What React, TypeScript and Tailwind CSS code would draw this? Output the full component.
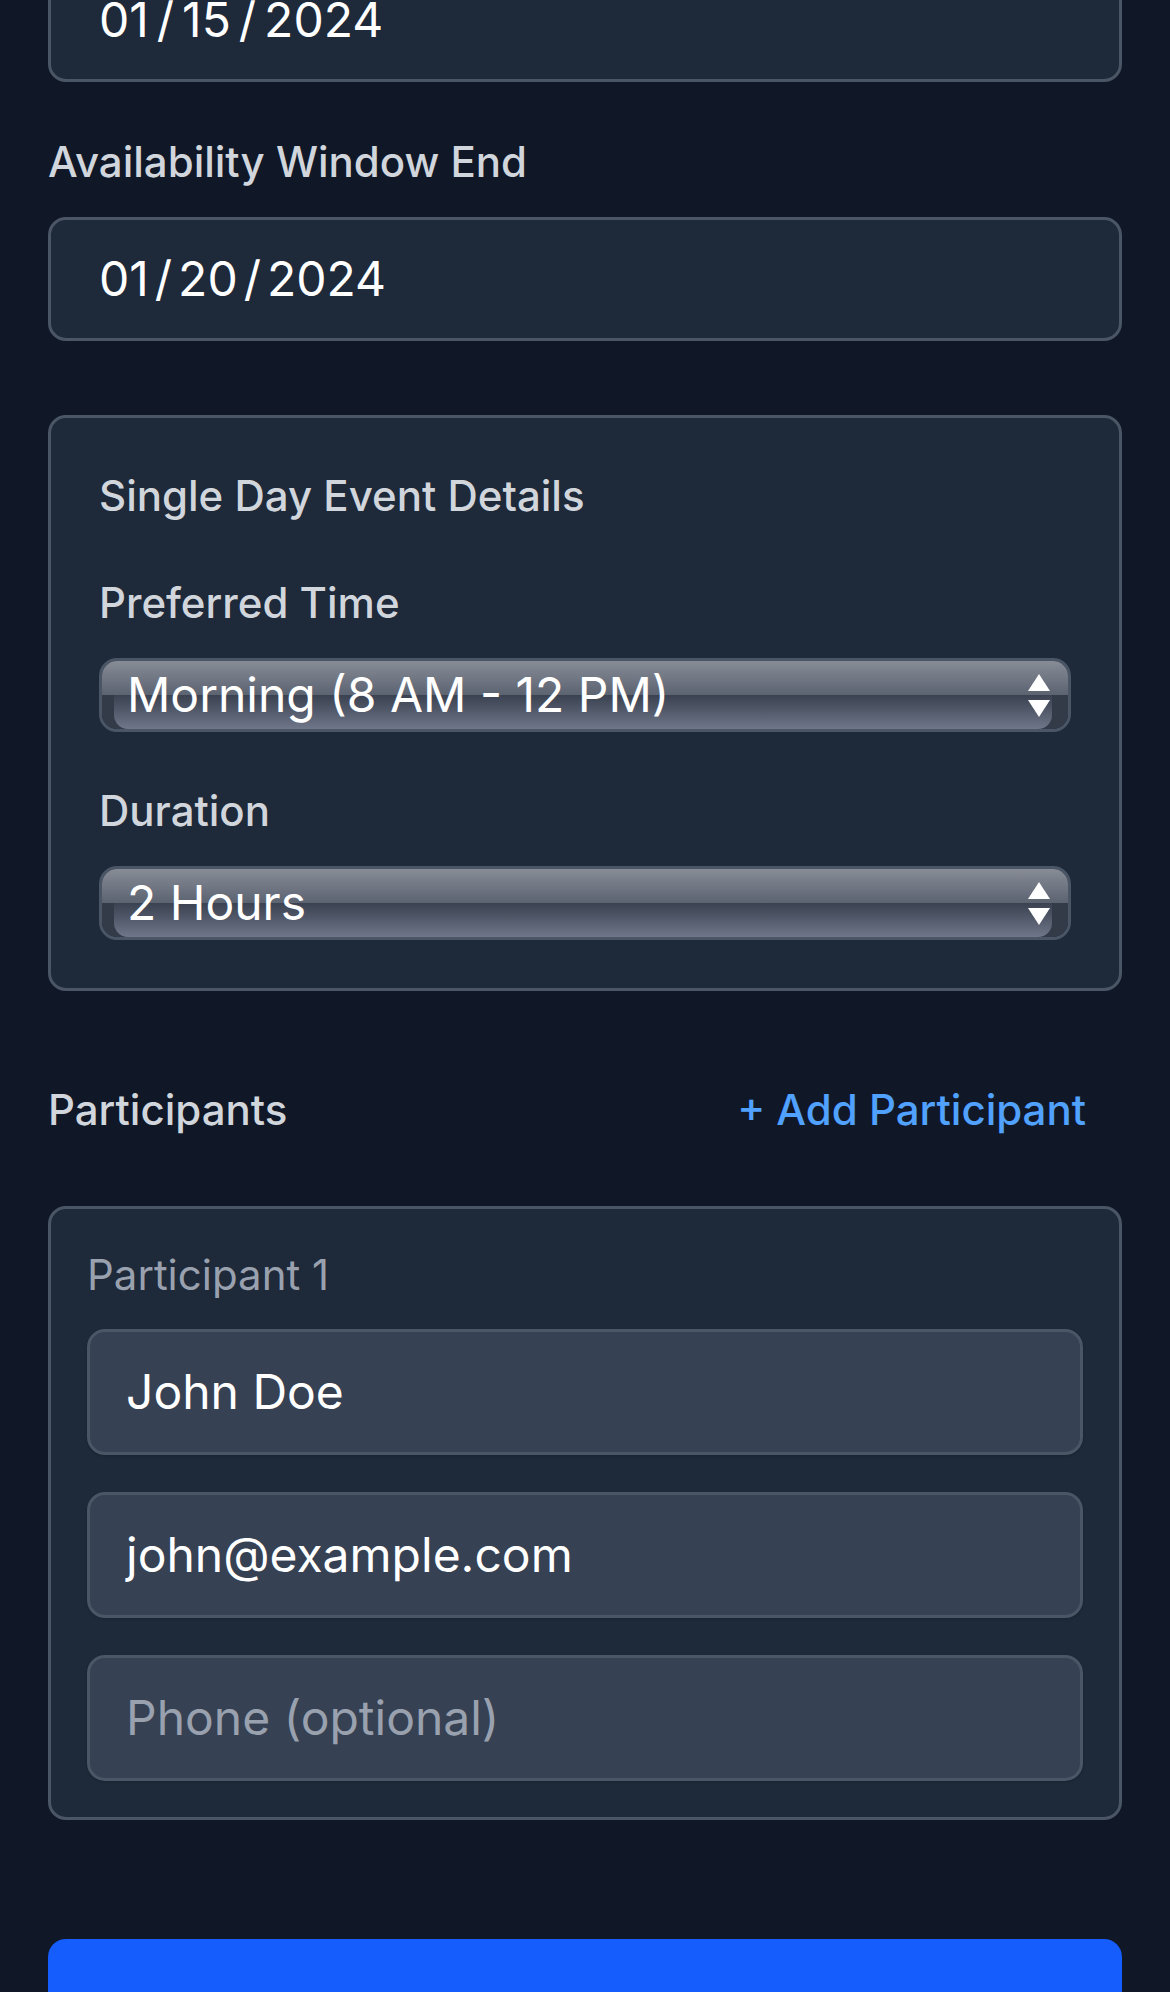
import React from "react";

const font = { fontFamily: "Inter, 'Noto Sans', sans-serif" };

function Label({ children }: { children: React.ReactNode }) {
  return <p className="mb-[25px] text-[42px] leading-[60px] font-medium text-gray-300">{children}</p>;
}

// date segments are spaced like a native date input
function DateField({ parts, wide }: { parts: string[]; wide?: boolean }) {
  const sep = wide ? "mx-[8px]" : "mx-[6px]";
  return (
    <div className="flex h-[124px] items-center rounded-[18px] border-[3px] border-gray-600 bg-gray-800 px-[48px]">
      <span className="text-[48px] leading-[72px] text-white">
        {parts[0]}
        <span className={sep}>/</span>
        {parts[1]}
        <span className={sep}>/</span>
        {parts[2]}
      </span>
    </div>
  );
}

function GlossSelect({ value }: { value: string }) {
  return (
    <div className="grid h-[74px] overflow-hidden rounded-[18px] border-[3px] border-gray-600">
      {/* webkit-ish glossy menulist look */}
      <div className="flex flex-col [grid-area:1/1]">
        <div className="h-1/2 bg-gradient-to-b from-[#878c96] to-[#5c6371]" />
        <div className="flex h-1/2 bg-[#333a48]">
          <div className="w-[12px]" />
          <div className="flex-1 rounded-b-[14px] bg-gradient-to-b from-[#3a4150] to-[#70778a]" />
          <div className="w-[16px]" />
        </div>
      </div>
      <div className="flex items-center justify-between pl-[25px] pr-[18px] [grid-area:1/1]">
        <span className="text-[48px] leading-[60px] text-white">{value}</span>
        <svg width="22" height="43" viewBox="0 0 22 43" fill="white">
          <polygon points="11,0 22,17 0,17" />
          <polygon points="0,26 22,26 11,43" />
        </svg>
      </div>
    </div>
  );
}

function TextField({ value, placeholder }: { value?: string; placeholder?: string }) {
  return (
    <div className="flex h-[126px] items-center rounded-[18px] border-[3px] border-gray-600 bg-gray-700 px-[36px] shadow-sm">
      {value ? (
        <span className="text-[48px] leading-[72px] text-white">{value}</span>
      ) : (
        <span className="text-[48px] leading-[72px] text-gray-400">{placeholder}</span>
      )}
    </div>
  );
}

export default function App() {
  return (
    <div className="h-[1992px] w-full overflow-hidden bg-gray-900" style={font}>
      <div className="mt-[-42px] px-[48px]">
        <DateField parts={["01", "15", "2024"]} wide />

        <div className="mt-[50px]">
          <Label>Availability Window End</Label>
          <DateField parts={["01", "20", "2024"]} />
        </div>

        <section className="mt-[74px] rounded-[18px] border-[3px] border-gray-600 bg-gray-800 p-[48px]">
          <h3 className="mb-[47px] text-[42px] leading-[60px] font-medium text-gray-300">Single Day Event Details</h3>
          <Label>Preferred Time</Label>
          <GlossSelect value="Morning (8 AM - 12 PM)" />
          <div className="mt-[49px]">
            <Label>Duration</Label>
            <GlossSelect value="2 Hours" />
          </div>
        </section>

        <div className="mt-[70px] mb-[47px] flex h-[98px] items-center justify-between">
          <h3 className="text-[42px] leading-[60px] font-medium text-gray-300">Participants</h3>
          <button className="pr-[36px] text-[42px] leading-[60px] font-medium text-blue-400">+ Add Participant</button>
        </div>

        <div className="rounded-[18px] border-[3px] border-gray-600 bg-gray-800 p-[36px]">
          <p className="mb-[24px] text-[42px] leading-[60px] text-gray-400">Participant 1</p>
          <div className="flex flex-col gap-[37px]">
            <TextField value="John Doe" />
            <TextField value="john@example.com" />
            <TextField placeholder="Phone (optional)" />
          </div>
        </div>

        <button className="mt-[119px] flex h-[200px] w-full items-center justify-center rounded-[18px] bg-blue-600 text-[48px] font-semibold text-white">
          Schedule Event
        </button>
      </div>
    </div>
  );
}
